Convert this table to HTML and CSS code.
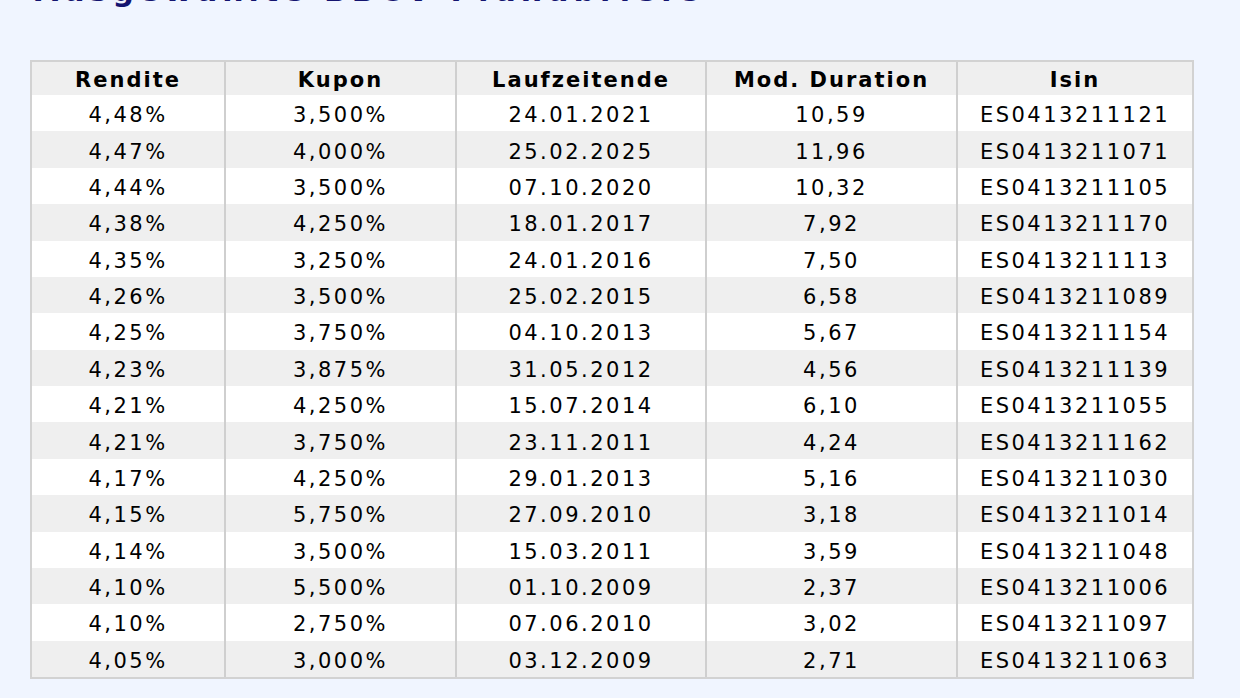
FILE: index.html
```html
<!DOCTYPE html>
<html lang="de">
<head>
<meta charset="utf-8">
<title>Ausgewählte Pfandbriefe</title>
<link rel="stylesheet" href="styles.css">
</head>
<body>
<div class="page">
  <h1 class="title">Ausgewählte BBCV Pfandbriefe</h1>
  <table class="bonds">
    <thead>
      <tr>
        <th class="c1">Rendite</th>
        <th class="c2">Kupon</th>
        <th class="c3">Laufzeitende</th>
        <th class="c4">Mod. Duration</th>
        <th class="c5">Isin</th>
      </tr>
    </thead>
    <tbody>
      <tr><td>4,48%</td><td>3,500%</td><td>24.01.2021</td><td>10,59</td><td>ES0413211121</td></tr>
      <tr><td>4,47%</td><td>4,000%</td><td>25.02.2025</td><td>11,96</td><td>ES0413211071</td></tr>
      <tr><td>4,44%</td><td>3,500%</td><td>07.10.2020</td><td>10,32</td><td>ES0413211105</td></tr>
      <tr><td>4,38%</td><td>4,250%</td><td>18.01.2017</td><td>7,92</td><td>ES0413211170</td></tr>
      <tr><td>4,35%</td><td>3,250%</td><td>24.01.2016</td><td>7,50</td><td>ES0413211113</td></tr>
      <tr><td>4,26%</td><td>3,500%</td><td>25.02.2015</td><td>6,58</td><td>ES0413211089</td></tr>
      <tr><td>4,25%</td><td>3,750%</td><td>04.10.2013</td><td>5,67</td><td>ES0413211154</td></tr>
      <tr><td>4,23%</td><td>3,875%</td><td>31.05.2012</td><td>4,56</td><td>ES0413211139</td></tr>
      <tr><td>4,21%</td><td>4,250%</td><td>15.07.2014</td><td>6,10</td><td>ES0413211055</td></tr>
      <tr><td>4,21%</td><td>3,750%</td><td>23.11.2011</td><td>4,24</td><td>ES0413211162</td></tr>
      <tr><td>4,17%</td><td>4,250%</td><td>29.01.2013</td><td>5,16</td><td>ES0413211030</td></tr>
      <tr><td>4,15%</td><td>5,750%</td><td>27.09.2010</td><td>3,18</td><td>ES0413211014</td></tr>
      <tr><td>4,14%</td><td>3,500%</td><td>15.03.2011</td><td>3,59</td><td>ES0413211048</td></tr>
      <tr><td>4,10%</td><td>5,500%</td><td>01.10.2009</td><td>2,37</td><td>ES0413211006</td></tr>
      <tr><td>4,10%</td><td>2,750%</td><td>07.06.2010</td><td>3,02</td><td>ES0413211097</td></tr>
      <tr><td>4,05%</td><td>3,000%</td><td>03.12.2009</td><td>2,71</td><td>ES0413211063</td></tr>
    </tbody>
  </table>
</div>
</body>
</html>
```
FILE: styles.css
```css
html, body {
  margin: 0;
  padding: 0;
  background: #f0f5ff;
}

.page {
  padding: 0 0 0 30px;
  font-family: "DejaVu Sans", Verdana, sans-serif;
  color: #000;
}

.title {
  margin: -24px 0 0 5px;
  font-size: 30px;
  line-height: 30px;
  font-weight: bold;
  letter-spacing: 5px;
  color: #141470;
  white-space: nowrap;
}

.bonds {
  margin-top: 54px;
  width: 1164px;
  table-layout: fixed;
  border-collapse: separate;
  border-spacing: 0;
  border: 2px solid #d2d2d2;
  font-size: 21px;
  letter-spacing: 2.5px;
}

.bonds th,
.bonds td {
  box-sizing: border-box;
  text-align: center;
  vertical-align: middle;
  border-left: 2px solid #cfcfcf;
}

.bonds th:first-child,
.bonds td:first-child {
  border-left: 0;
}

.bonds th {
  height: 33px;
  padding: 2px 0 0;
  font-weight: bold;
  background: #efefef;
  letter-spacing: 2px;
}

.bonds td {
  height: 36.375px;
  padding: 4px 0 0;
  background: #ffffff;
}

.bonds tbody tr:nth-child(even) td {
  background: #efefef;
}

.c1 { width: 192px; }
.c2 { width: 231px; }
.c3 { width: 250px; }
.c4 { width: 251px; }
.c5 { width: 236px; }
```
